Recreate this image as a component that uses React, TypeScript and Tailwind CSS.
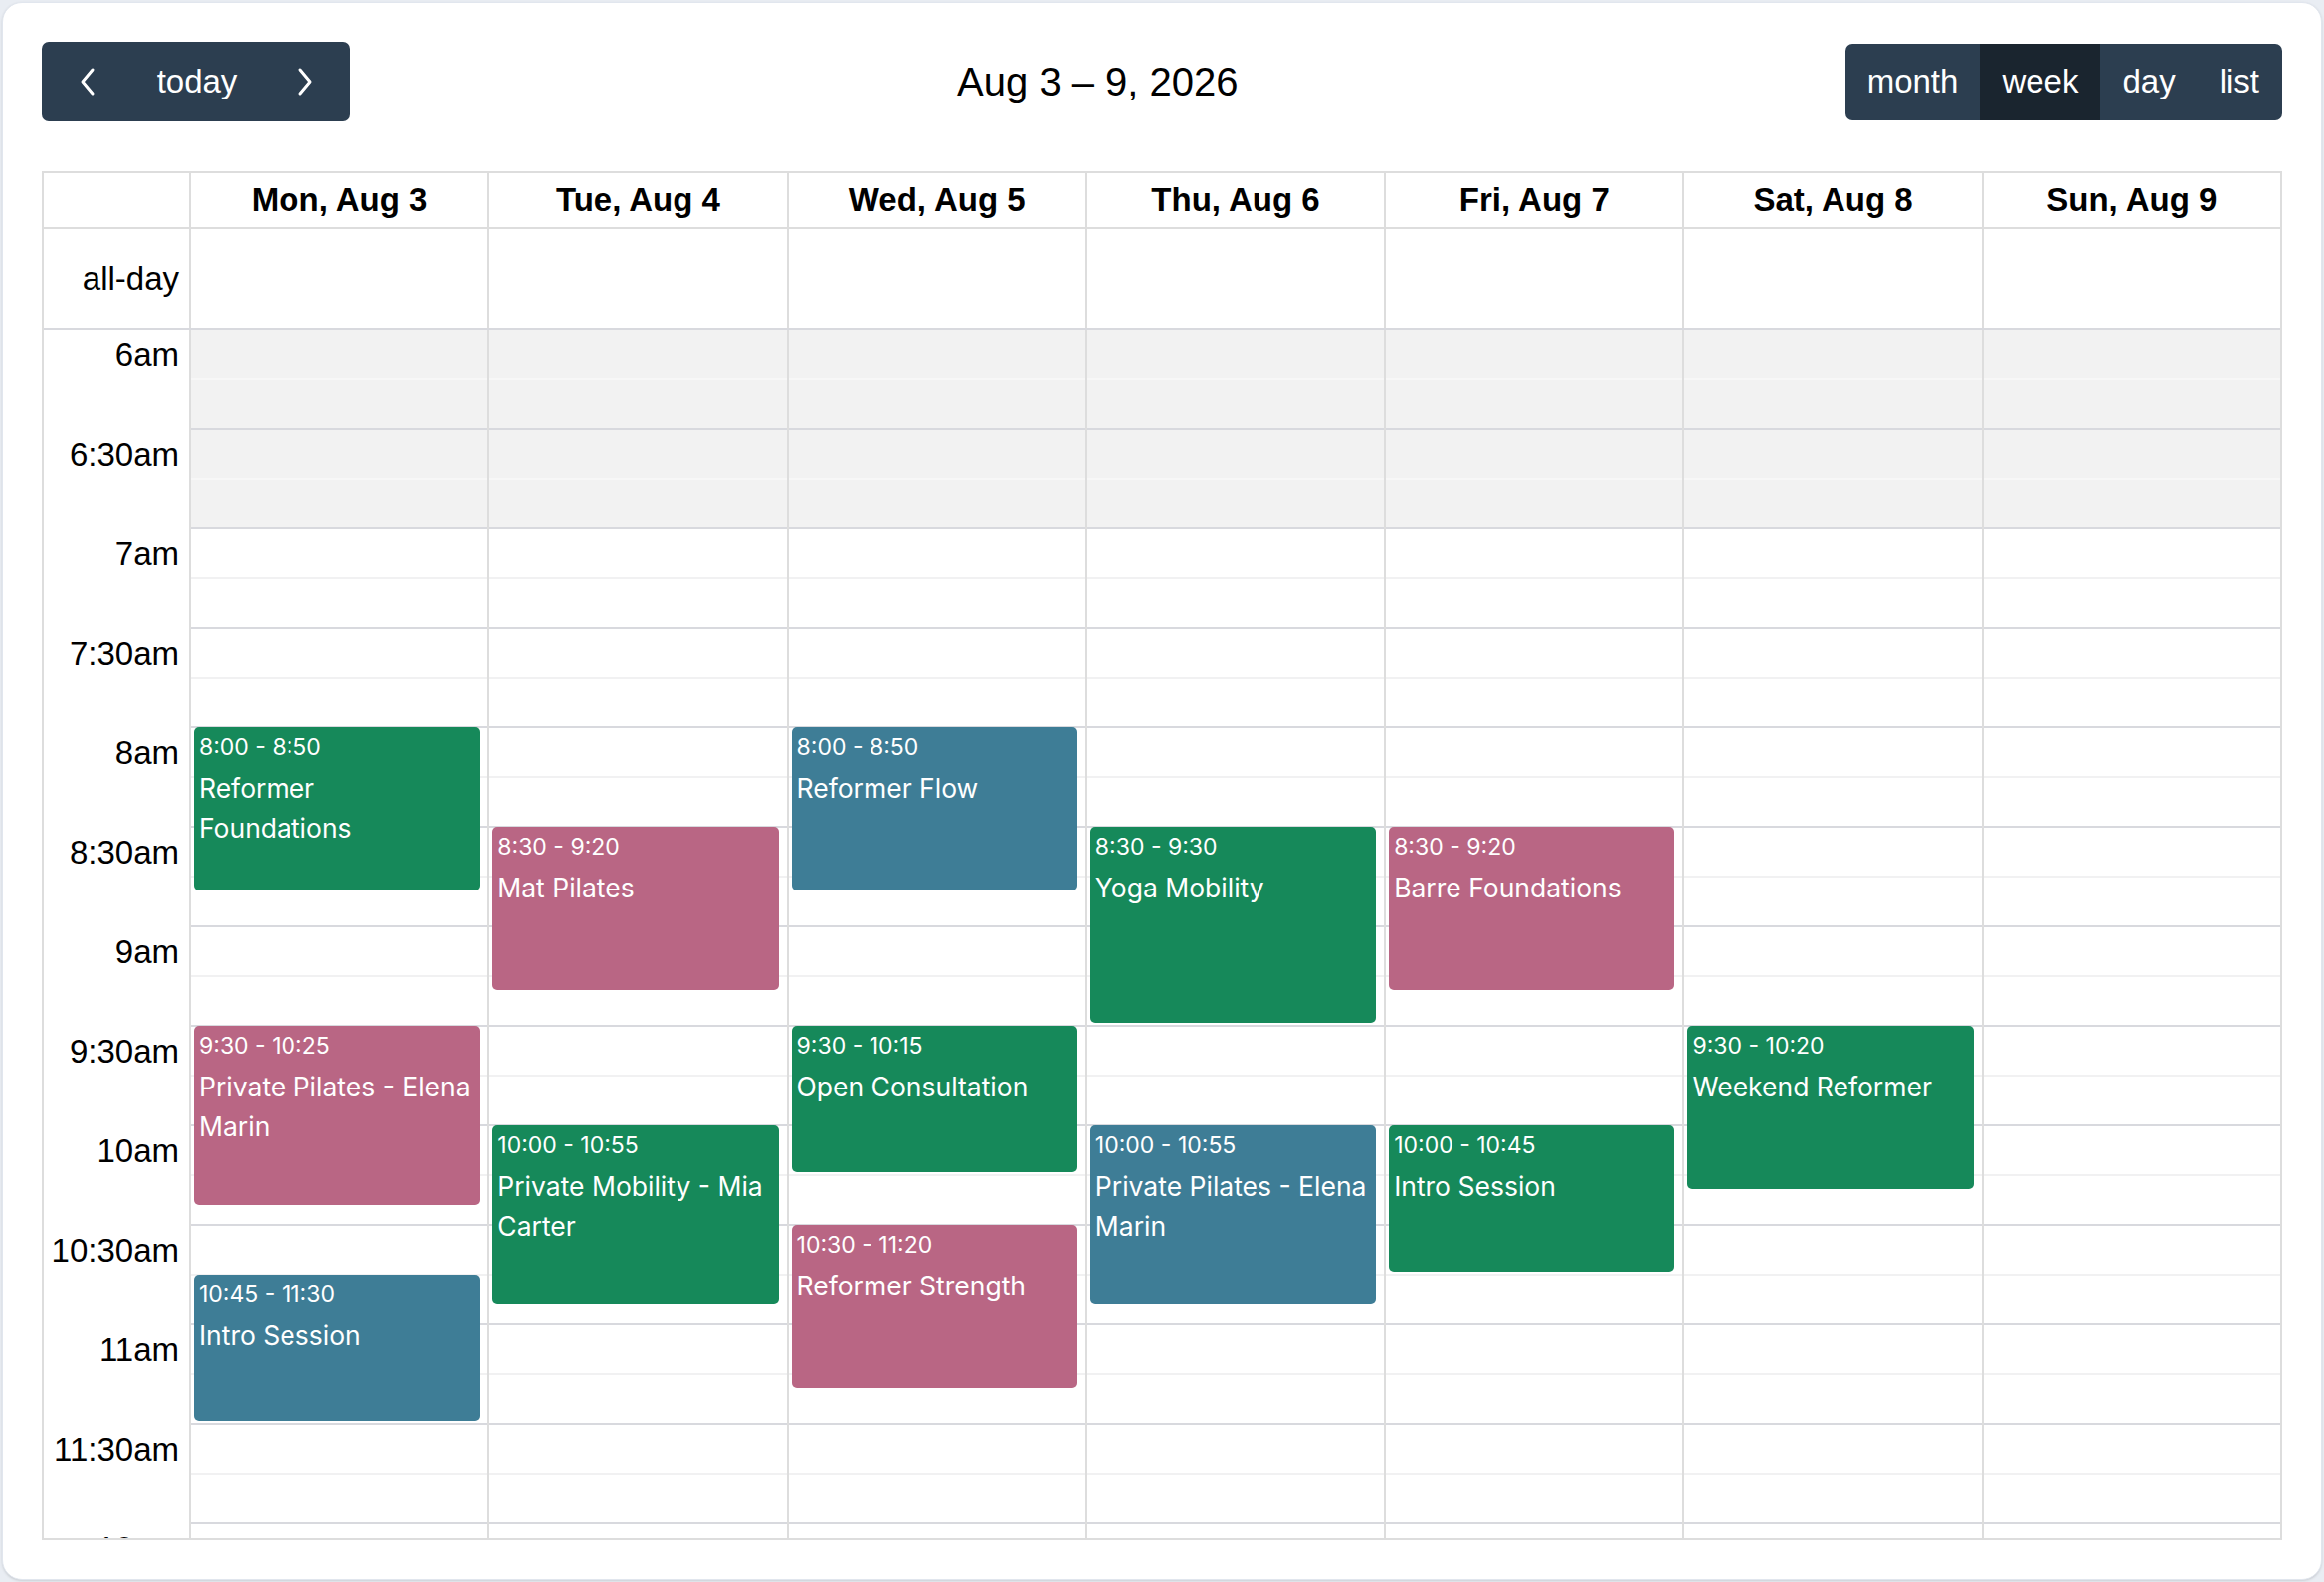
import React from "react";

type CalEvent = {
  day: number;
  start: string;
  end: string;
  title: string[];
  color: string;
};

const GREEN = "bg-[#16895a]";
const PINK = "bg-[#b96684]";
const BLUE = "bg-[#3e7d96]";

const DAYS = ["Mon, Aug 3", "Tue, Aug 4", "Wed, Aug 5", "Thu, Aug 6", "Fri, Aug 7", "Sat, Aug 8", "Sun, Aug 9"];

const SLOT_LABELS = ["6am", "6:30am", "7am", "7:30am", "8am", "8:30am", "9am", "9:30am", "10am", "10:30am", "11am", "11:30am", "12pm"];

// titles are split where the calendar wraps them
const EVENTS: CalEvent[] = [
  { day: 0, start: "8:00", end: "8:50", title: ["Reformer", "Foundations"], color: GREEN },
  { day: 0, start: "9:30", end: "10:25", title: ["Private Pilates - Elena", "Marin"], color: PINK },
  { day: 0, start: "10:45", end: "11:30", title: ["Intro Session"], color: BLUE },
  { day: 1, start: "8:30", end: "9:20", title: ["Mat Pilates"], color: PINK },
  { day: 1, start: "10:00", end: "10:55", title: ["Private Mobility - Mia", "Carter"], color: GREEN },
  { day: 2, start: "8:00", end: "8:50", title: ["Reformer Flow"], color: BLUE },
  { day: 2, start: "9:30", end: "10:15", title: ["Open Consultation"], color: GREEN },
  { day: 2, start: "10:30", end: "11:20", title: ["Reformer Strength"], color: PINK },
  { day: 3, start: "8:30", end: "9:30", title: ["Yoga Mobility"], color: GREEN },
  { day: 3, start: "10:00", end: "10:55", title: ["Private Pilates - Elena", "Marin"], color: BLUE },
  { day: 4, start: "8:30", end: "9:20", title: ["Barre Foundations"], color: PINK },
  { day: 4, start: "10:00", end: "10:45", title: ["Intro Session"], color: GREEN },
  { day: 5, start: "9:30", end: "10:20", title: ["Weekend Reformer"], color: GREEN },
];

// grid starts at 6am, 100px per half hour
const DAY_START = 6 * 60;
const PX_PER_MIN = 10 / 3;
const ROWS = 25;

function toMinutes(t: string) {
  const [h, m] = t.split(":").map(Number);
  return h * 60 + m;
}

function Chevron({ dir }: { dir: "left" | "right" }) {
  return (
    <svg width="22" height="30" viewBox="0 0 22 30" fill="none">
      <polyline
        points={dir === "left" ? "16,3 6,15 16,27" : "6,3 16,15 6,27"}
        stroke="white"
        strokeWidth="3"
        strokeLinecap="round"
        strokeLinejoin="round"
      />
    </svg>
  );
}

function Toolbar() {
  return (
    <div className="flex items-center justify-between">
      <div className="flex h-[80px] overflow-hidden rounded-[7px] bg-[#2c3e50] text-white">
        <button className="flex w-[92px] items-center justify-center">
          <Chevron dir="left" />
        </button>
        <button className="w-[128px] text-[33px]">today</button>
        <button className="flex w-[90px] items-center justify-center">
          <Chevron dir="right" />
        </button>
      </div>
      <h2 className="text-[40px] text-black">Aug 3 – 9, 2026</h2>
      <div className="flex h-[77px] overflow-hidden rounded-[7px] bg-[#2c3e50] text-[33px] text-white">
        <button className="px-[22px]">month</button>
        <button className="bg-[#1a252f] px-[22px]">week</button>
        <button className="px-[22px]">day</button>
        <button className="pl-[22px] pr-[23px]">list</button>
      </div>
    </div>
  );
}

function EventBlock({ ev }: { ev: CalEvent }) {
  const s = toMinutes(ev.start);
  const e = toMinutes(ev.end);
  return (
    <div
      className={`absolute left-[3px] right-[8px] overflow-hidden rounded-[5px] px-[5px] pt-[3px] text-white ${ev.color}`}
      style={{ top: (s - DAY_START) * PX_PER_MIN - 1, height: (e - s) * PX_PER_MIN - 3 }}>
      <div className="text-[23px] leading-[34px]">
        {ev.start} - {ev.end}
      </div>
      <div className="mt-[4px] text-[26.5px] leading-[40px]">
        {ev.title.map((line) => (
          <div key={line} className="whitespace-nowrap">
            {line}
          </div>
        ))}
      </div>
    </div>
  );
}

function DayColumn({ day }: { day: number }) {
  return (
    <div className="relative border-l-2 border-[#dddddd]">
      {Array.from({ length: ROWS }, (_, i) => (
        <div
          key={i}
          className={`${i === 0 ? "h-[48px]" : "h-[50px] border-t-2"} ${
            i % 2 === 0 ? "border-[#d8d9de]" : i < 4 ? "border-[#f7f7f7]" : "border-[#f1f1f2]"
          } ${i < 4 ? "bg-[#f2f2f2]" : ""}`}
        />
      ))}
      {EVENTS.filter((ev) => ev.day === day).map((ev, i) => (
        <EventBlock key={i} ev={ev} />
      ))}
    </div>
  );
}

export default function App() {
  return (
    <div className="min-h-screen bg-[#e9edf3] p-[2px] font-['Liberation_Sans',Arial,sans-serif]">
      <div className="h-[1586px] rounded-[20px] border border-[#e1e6ee] bg-white p-[39px] shadow-sm">
        <Toolbar />
        <div className="mt-[50px] border-2 border-[#dddddd]">
          <div className="grid h-[56px] grid-cols-[146px_repeat(7,minmax(0,1fr))] border-b-2 border-[#dddddd]">
            <div />
            {DAYS.map((d) => (
              <div
                key={d}
                className="flex items-center justify-center border-l-2 border-[#dddddd] text-[33px] font-bold text-black">
                {d}
              </div>
            ))}
          </div>
          <div className="grid h-[100px] grid-cols-[146px_repeat(7,minmax(0,1fr))]">
            <div className="flex items-center justify-end pr-[10px] text-[33px] text-black">all-day</div>
            {DAYS.map((d) => (
              <div key={d} className="border-l-2 border-[#dddddd]" />
            ))}
          </div>
          <div className="grid h-[1216px] grid-cols-[146px_repeat(7,minmax(0,1fr))] overflow-hidden border-t-2 border-[#d8d9de] font-['Inter',sans-serif]">
            <div className="-mt-[2px] font-['Liberation_Sans',Arial,sans-serif]">
              {SLOT_LABELS.map((l) => (
                <div key={l} className="h-[100px] pr-[10px] pt-[8px] text-right text-[33px] leading-[38px] text-black">
                  {l}
                </div>
              ))}
            </div>
            {DAYS.map((d, i) => (
              <DayColumn key={d} day={i} />
            ))}
          </div>
        </div>
      </div>
    </div>
  );
}
